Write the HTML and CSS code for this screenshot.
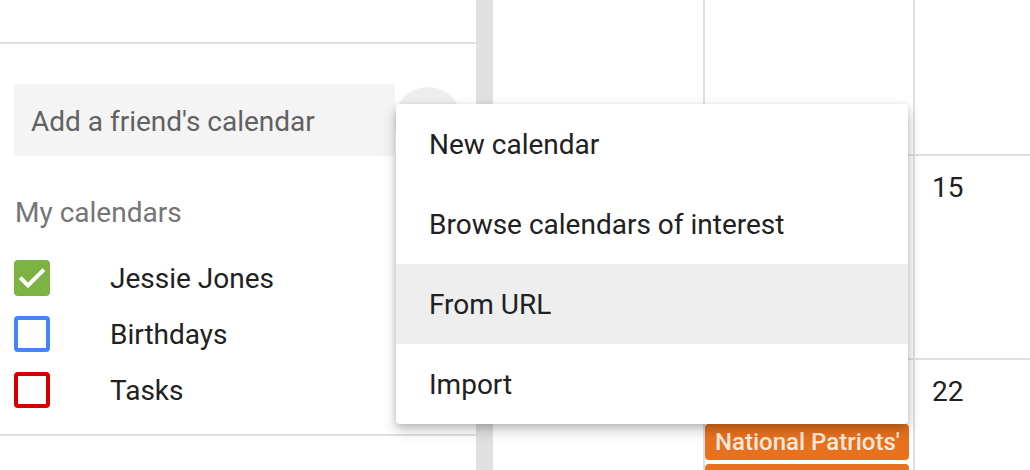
FILE: index.html
```html
<!DOCTYPE html>
<html lang="en">
<head>
<meta charset="utf-8">
<title>Calendar</title>
<link rel="stylesheet" href="styles.css">
</head>
<body>
<div class="app">
  <aside class="sidebar">
    <div class="side-top"></div>
    <div class="friend-row">
      <div class="friend-input">Add a friend's calendar</div>
      <div class="round-btn"></div>
    </div>
    <div class="section-title">My calendars</div>
    <ul class="cal-list">
      <li class="cal-item">
        <span class="box box-checked">
          <svg viewBox="0 0 36 36" width="36" height="36"><path d="M7.5 19 L14 25.5 L28.5 11" fill="none" stroke="#fff" stroke-width="4" stroke-linecap="square"/></svg>
        </span>
        <span class="cal-name">Jessie Jones</span>
      </li>
      <li class="cal-item">
        <span class="box box-blue"></span>
        <span class="cal-name">Birthdays</span>
      </li>
      <li class="cal-item">
        <span class="box box-red"></span>
        <span class="cal-name">Tasks</span>
      </li>
    </ul>
    <div class="side-bottom"></div>
  </aside>
  <div class="scroll-band"></div>
  <main class="grid">
    <div class="cell"></div>
    <div class="cell col2"></div>
    <div class="cell col3"></div>
    <div class="cell row2"></div>
    <div class="cell col2 row2"></div>
    <div class="cell col3 row2"><span class="date">15</span></div>
    <div class="cell row3"></div>
    <div class="cell col2 row3">
      <div class="events">
        <div class="chip">National Patriots'</div>
        <div class="chip"></div>
      </div>
    </div>
    <div class="cell col3 row3"><span class="date">22</span></div>
  </main>
</div>
<div class="menu">
  <div class="menu-item">New calendar</div>
  <div class="menu-item">Browse calendars of interest</div>
  <div class="menu-item active">From URL</div>
  <div class="menu-item">Import</div>
</div>
</body>
</html>
```
FILE: styles.css
```css
* { box-sizing: border-box; }
html, body {
  margin: 0;
  padding: 0;
  width: 1030px;
  height: 470px;
  overflow: hidden;
  background: #fff;
  font-family: Roboto, "Liberation Sans", Arial, sans-serif;
}
.app {
  display: flex;
  height: 470px;
  overflow: hidden;
}
.sidebar {
  width: 476px;
  flex: none;
  display: flex;
  flex-direction: column;
  overflow: hidden;
}
.side-top {
  height: 44px;
  border-bottom: 2px solid #e0e0e0;
  flex: none;
}
.friend-row {
  display: flex;
  align-items: center;
  margin-top: 40px;
  padding-left: 14px;
  height: 72px;
  flex: none;
}
.friend-input {
  width: 381px;
  height: 72px;
  background: #f4f4f4;
  border-radius: 4px;
  padding: 3px 0 0 17px;
  display: flex;
  align-items: center;
  font-size: 28px;
  color: #616161;
}
.round-btn {
  width: 68px;
  height: 68px;
  border-radius: 50%;
  background: #eeeeee;
  margin-left: -1px;
  margin-top: 2px;
}
.section-title {
  margin-top: 39px;
  padding-left: 15px;
  font-size: 28px;
  line-height: 36px;
  color: #757575;
  flex: none;
}
.cal-list {
  list-style: none;
  margin: 29px 0 0;
  padding: 0 0 0 14px;
  display: flex;
  flex-direction: column;
  gap: 20px;
  flex: none;
}
.cal-item {
  display: flex;
  align-items: center;
  height: 36px;
}
.box {
  width: 36px;
  height: 36px;
  border-radius: 4px;
  flex: none;
  display: block;
}
.box svg { display: block; }
.box-checked { background: #7cb342; }
.box-blue { border: 4px solid #4285f4; }
.box-red { border: 4px solid #d50000; }
.cal-name {
  margin-left: 60px;
  font-size: 28px;
  color: #212121;
}
.side-bottom {
  margin-top: 26px;
  border-top: 2px solid #e0e0e0;
  flex: none;
}
.scroll-band {
  width: 17px;
  flex: none;
  background: #e0e0e0;
}
.grid {
  flex: 1;
  display: grid;
  grid-template-columns: 210px 210px 1fr;
  grid-template-rows: 154px 204px 112px;
}
.cell { overflow: hidden; }
.col2, .col3 { border-left: 2px solid #e0e0e0; }
.row2, .row3 { border-top: 2px solid #e0e0e0; }
.date {
  display: block;
  padding: 14px 0 0 17px;
  font-size: 28px;
  line-height: 36px;
  color: #212121;
}
.events {
  padding: 64px 4px 0 0;
  display: flex;
  flex-direction: column;
  gap: 4px;
}
.chip {
  height: 36px;
  flex: none;
  border-radius: 4px;
  background: #e8711e;
  color: #fbe9dc;
  font-size: 24px;
  font-weight: 500;
  padding-left: 10px;
  line-height: 36px;
  white-space: nowrap;
  overflow: hidden;
}
.menu {
  position: absolute;
  left: 396px;
  top: 104px;
  width: 512px;
  background: #fff;
  border-radius: 4px;
  box-shadow: 0 6px 14px rgba(0,0,0,0.22), 0 2px 6px rgba(0,0,0,0.12);
}
.menu-item {
  height: 80px;
  display: flex;
  align-items: center;
  padding-left: 33px;
  font-size: 28px;
  color: #212121;
}
.menu-item.active { background: #eeeeee; }
```
